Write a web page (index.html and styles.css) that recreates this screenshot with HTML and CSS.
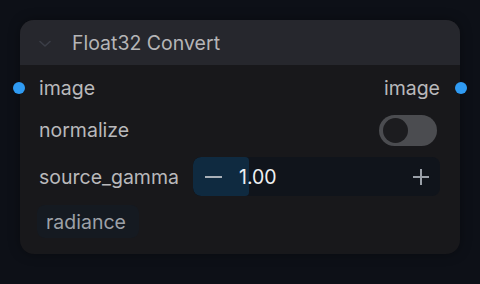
FILE: index.html
```html
<!DOCTYPE html>
<html>
<head>
<meta charset="utf-8">
<link rel="stylesheet" href="styles.css">
</head>
<body>
<div class="node">
  <div class="header">
    <svg class="chev" width="14" height="8" viewBox="0 0 14 8"><path d="M2 1.5 L7 6 L12 1.5" fill="none" stroke="#3b3e47" stroke-width="1.6" stroke-linecap="round" stroke-linejoin="round"/></svg>
    <span class="title">Float32 Convert</span>
  </div>
  <div class="content">
    <div class="row io">
      <span class="dot dot-left"></span>
      <span class="label">image</span>
      <span class="label">image</span>
      <span class="dot dot-right"></span>
    </div>
    <div class="row">
      <span class="label">normalize</span>
      <span class="toggle"><span class="knob"></span></span>
    </div>
    <div class="row slider-row">
      <span class="label">source_gamma</span>
      <div class="slider">
        <div class="fill" style="width:56px"></div>
        <span class="minus"></span>
        <span class="value">1.00</span>
        <span class="plus"></span>
      </div>
    </div>
    <div class="badge-row">
      <span class="badge">radiance</span>
    </div>
  </div>
</div>
</body>
</html>
```
FILE: styles.css
```css
html, body {
  margin: 0;
  padding: 0;
}
body {
  width: 480px;
  height: 284px;
  background: #0d1017;
  font-family: Inter, "Noto Sans", sans-serif;
  padding: 20px 0 0 20px;
  box-sizing: border-box;
}
.node {
  width: 440px;
  height: 234px;
  background: #18181b;
  border-radius: 14px;
  box-shadow: 0 0 12px rgba(0,0,0,0.35);
  position: relative;
  box-sizing: border-box;
}
.header {
  height: 45px;
  background: #26272d;
  border-radius: 14px 14px 0 0;
  display: flex;
  align-items: center;
  padding-left: 18px;
}
.chev {
  margin-right: 20px;
  margin-top: 2px;
}
.title {
  color: #b5b5b7;
  font-size: 19.5px;
}
.content {
  padding: 2px 20px 0 19px;
  display: flex;
  flex-direction: column;
}
.row {
  height: 42px;
  display: flex;
  align-items: center;
  justify-content: space-between;
  position: relative;
}
.label {
  color: #b9b9bb;
  font-size: 19.5px;
}
.dot {
  position: absolute;
  width: 12px;
  height: 12px;
  border-radius: 50%;
  background: #2f9bf3;
  top: 15px;
}
.dot-left { left: -26px; }
.dot-right { right: -27px; }
.toggle {
  width: 58px;
  height: 31px;
  border-radius: 16px;
  background: #4b4c50;
  display: flex;
  align-items: center;
  padding-left: 4px;
  box-sizing: border-box;
  margin-right: 3px;
  margin-top: 1px;
}
.knob {
  width: 25px;
  height: 25px;
  border-radius: 50%;
  background: #1c1c1f;
}
.slider-row {
  height: 39px;
  margin-top: 6px;
}
.slider {
  width: 247px;
  height: 39px;
  background: #10141b;
  border-radius: 8px;
  position: relative;
  display: flex;
  align-items: center;
  overflow: hidden;
}
.fill {
  position: absolute;
  left: 0;
  top: 0;
  bottom: 0;
  background: #0f2a40;
  border-radius: 8px 4px 4px 8px;
}
.minus {
  position: relative;
  width: 17px;
  height: 2px;
  background: #a9b0b8;
  margin-left: 12px;
}
.value {
  position: relative;
  color: #eef0f2;
  font-size: 19.5px;
  margin-left: 17px;
}
.plus {
  position: relative;
  width: 16px;
  height: 16px;
  margin-left: auto;
  margin-right: 11px;
}
.plus::before, .plus::after {
  content: "";
  position: absolute;
  background: #9aa0a8;
}
.plus::before {
  left: 0;
  right: 0;
  top: 7px;
  height: 2px;
}
.plus::after {
  top: 0;
  bottom: 0;
  left: 7px;
  width: 2px;
}
.badge-row {
  margin-top: 9px;
  margin-left: -2px;
  display: flex;
}
.badge {
  height: 33px;
  display: flex;
  align-items: center;
  padding: 0 13px 0 9px;
  background: #151a21;
  border-radius: 8px;
  color: #9da1a8;
  font-size: 19.5px;
}
```
